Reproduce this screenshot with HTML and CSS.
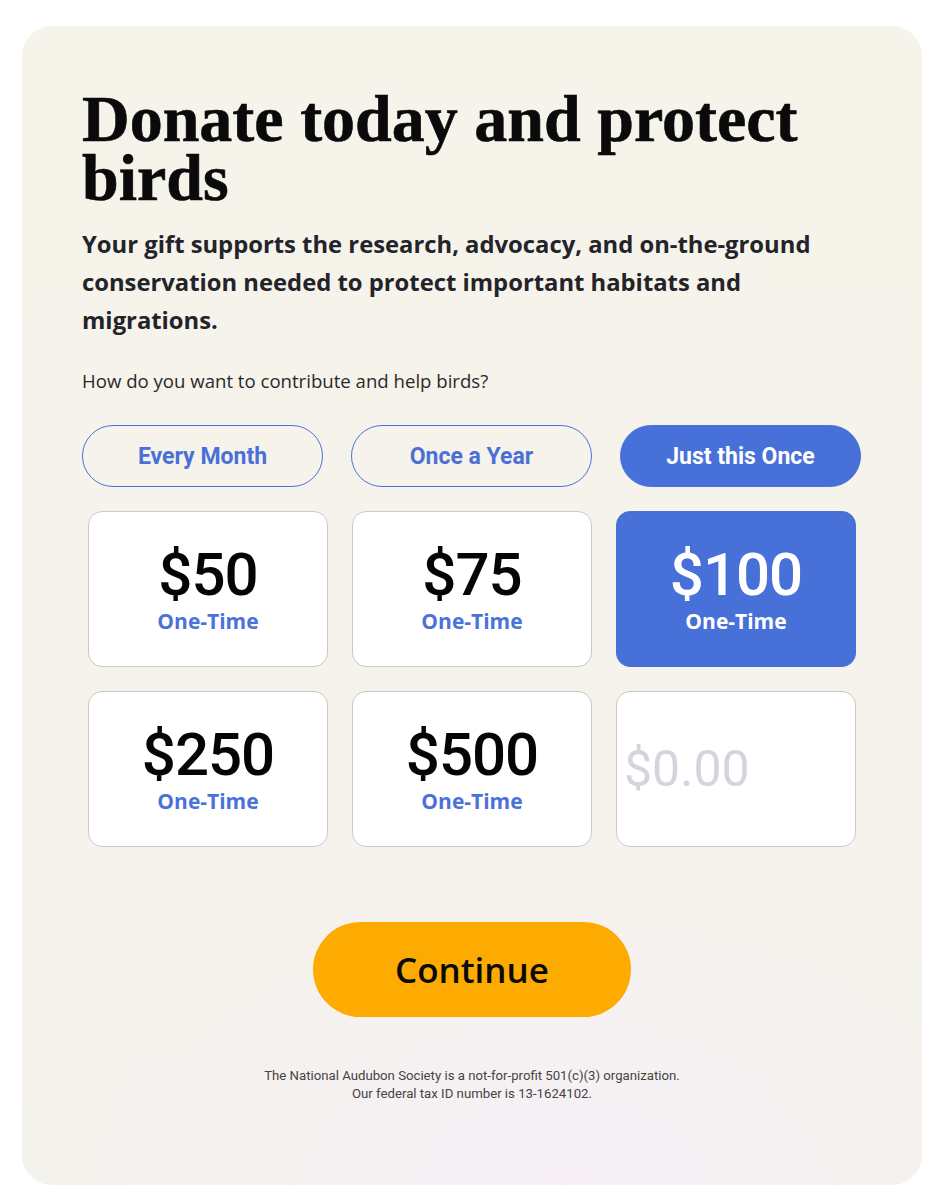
FILE: index.html
```html
<!DOCTYPE html>
<html lang="en">
<head>
<meta charset="utf-8">
<title>Donate today and protect birds</title>
<link rel="stylesheet" href="styles.css">
</head>
<body>
<main class="card">
  <h1 class="title">Donate today and protect birds</h1>
  <p class="lead">Your gift supports the research, advocacy, and on-the-ground conservation needed to protect important habitats and migrations.</p>
  <p class="question">How do you want to contribute and help birds?</p>
  <div class="freq">
    <button class="freq-btn">Every Month</button>
    <button class="freq-btn">Once a Year</button>
    <button class="freq-btn is-active">Just this Once</button>
  </div>
  <div class="amounts">
    <button class="amount"><span class="amount-value">$50</span><span class="amount-label">One-Time</span></button>
    <button class="amount"><span class="amount-value">$75</span><span class="amount-label">One-Time</span></button>
    <button class="amount is-active"><span class="amount-value">$100</span><span class="amount-label">One-Time</span></button>
    <button class="amount"><span class="amount-value">$250</span><span class="amount-label">One-Time</span></button>
    <button class="amount"><span class="amount-value">$500</span><span class="amount-label">One-Time</span></button>
    <label class="amount custom"><input class="custom-input" type="text" placeholder="$0.00"></label>
  </div>
  <div class="actions">
    <button class="continue">Continue</button>
  </div>
  <p class="legal">The National Audubon Society is a not-for-profit 501(c)(3) organization.<br>Our federal tax ID number is 13-1624102.</p>
</main>
</body>
</html>
```
FILE: styles.css
```css
* { box-sizing: border-box; }
html, body { margin: 0; padding: 0; background: #ffffff; }
body { font-family: "Roboto", "Open Sans", sans-serif; color: #222; }

.card {
  width: 900px;
  height: 1159px;
  margin: 26px 0 0 22px;
  padding: 63px 60px 0 60px;
  border-radius: 30px;
  background:
    radial-gradient(ellipse 60% 30% at 60% 100%, rgba(246, 240, 246, 1) 0%, rgba(246, 240, 246, 0) 100%),
    linear-gradient(180deg, #f5f3ea 0%, #f5f3eb 70%, #f4f2ec 100%);
}

.title {
  margin: 0;
  font-family: "Liberation Serif", "Times New Roman", serif;
  font-weight: 700;
  font-size: 66px;
  line-height: 59px;
  color: #0a0a0a;
  -webkit-text-stroke: 0.6px #0a0a0a;
}

.lead {
  margin: 18px 0 0;
  max-width: 760px;
  font-family: "Open Sans", sans-serif;
  font-weight: 700;
  font-size: 23.8px;
  line-height: 38px;
  color: #22242a;
}

.question {
  margin: 30px 0 0;
  font-family: "Open Sans", sans-serif;
  font-size: 18.6px;
  line-height: 24px;
  color: #2a2a2a;
}

.freq {
  display: flex;
  gap: 28px;
  margin-top: 32px;
}
.freq-btn {
  width: 241px;
  height: 62px;
  border: 1px solid #4a72d9;
  border-radius: 31px;
  background: transparent;
  color: #4a70d8;
  font-family: "Roboto", sans-serif;
  font-weight: 700;
  font-size: 23px;
  padding: 0;
}
.freq-btn.is-active {
  background: #4870d9;
  color: #ffffff;
}

.amounts {
  display: grid;
  grid-template-columns: repeat(3, 240px);
  grid-auto-rows: 156px;
  gap: 24px;
  margin: 24px 0 0 6px;
}
.amount {
  display: flex;
  flex-direction: column;
  align-items: center;
  justify-content: center;
  border: 1px solid #c9c9c9;
  border-radius: 14px;
  background: #ffffff;
  padding: 0;
  font-family: "Roboto", sans-serif;
}
.amount-value {
  font-size: 60px;
  font-weight: 500;
  line-height: 60px;
  color: #050505;
  letter-spacing: -1px;
}
.amount-label {
  margin-top: 3px;
  font-family: "Open Sans", sans-serif;
  font-size: 21px;
  font-weight: 700;
  line-height: 26px;
  color: #4a72d9;
}
.amount.is-active {
  background: #4870d9;
  border-color: #4870d9;
}
.amount.is-active .amount-value,
.amount.is-active .amount-label { color: #ffffff; }

.custom {
  align-items: stretch;
  padding: 0;
}
.custom-input {
  width: 100%;
  height: 100%;
  border: 0;
  outline: 0;
  background: transparent;
  padding: 0 0 0 7px;
  font-family: "Roboto", sans-serif;
  font-weight: 400;
  font-size: 50px;
  color: #222;
}
.custom-input::placeholder { color: #d2d6dc; }

.actions {
  display: flex;
  justify-content: center;
  margin-top: 75px;
}
.continue {
  width: 318px;
  height: 95px;
  border: 0;
  border-radius: 48px;
  background: #fdab00;
  color: #0a0a0a;
  font-family: "Open Sans", sans-serif;
  font-weight: 600;
  font-size: 35px;
}

.legal {
  margin: 50px 0 0;
  text-align: center;
  font-size: 13.2px;
  line-height: 18px;
  color: #444444;
}
```
